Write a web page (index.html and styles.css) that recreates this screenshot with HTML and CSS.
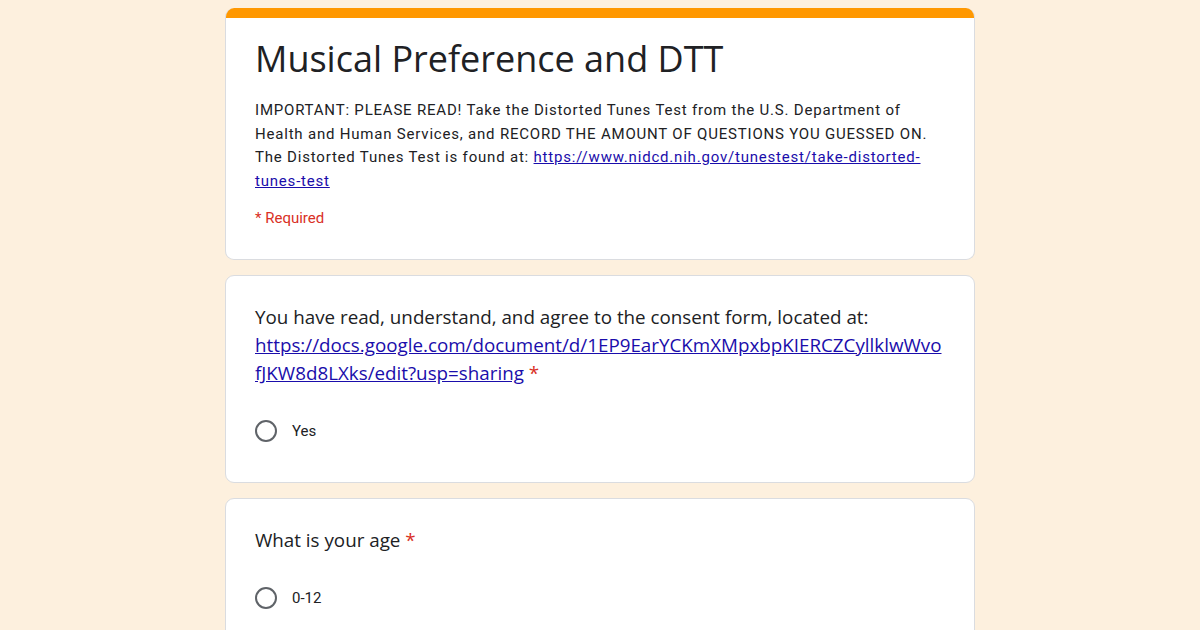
FILE: index.html
```html
<!DOCTYPE html>
<html lang="en">
<head>
<meta charset="utf-8">
<title>Musical Preference and DTT</title>
<link rel="stylesheet" href="styles.css">
</head>
<body>
<main class="form">
  <section class="card header-card">
    <div class="accent"></div>
    <div class="header-body">
      <h1 class="title">Musical Preference and DTT</h1>
      <p class="desc">IMPORTANT: PLEASE READ! Take the Distorted Tunes Test from the U.S. Department of Health and Human Services, and RECORD THE AMOUNT OF QUESTIONS YOU GUESSED ON. The Distorted Tunes Test is found at: <a class="link" href="#">https://www.nidcd.nih.gov/tunestest/take-distorted-tunes-test</a></p>
      <p class="required">* Required</p>
    </div>
  </section>

  <section class="card question">
    <div class="q-text">You have read, understand, and agree to the consent form, located at: <a class="link" href="#">https://docs.google.com/document/d/1EP9EarYCKmXMpxbpKIERCZCyllklwWvo<br>fJKW8d8LXks/edit?usp=sharing</a> <span class="star">*</span></div>
    <div class="options">
      <label class="option"><span class="radio"></span><span class="opt-label">Yes</span></label>
    </div>
  </section>

  <section class="card question">
    <div class="q-text">What is your age <span class="star">*</span></div>
    <div class="options">
      <label class="option"><span class="radio"></span><span class="opt-label">0-12</span></label>
    </div>
  </section>
</main>
</body>
</html>
```

FILE: styles.css
```css
html, body {
  margin: 0;
  padding: 0;
}
body {
  background: #fdf0de;
  font-family: Roboto, "Liberation Sans", sans-serif;
  color: #202124;
  height: 630px;
  overflow: hidden;
}
.form {
  width: 750px;
  margin: 8px auto 0;
  display: flex;
  flex-direction: column;
  gap: 15px;
}
.card {
  background: #fff;
  border: 1px solid #dadce0;
  border-radius: 9px;
  box-sizing: border-box;
}
.header-card {
  overflow: hidden;
  border-top: none;
}
.accent {
  height: 10px;
  background: #ff9800;
}
.header-body {
  padding: 19px 28px 29px 29px;
}
.title {
  margin: 0;
  font-family: "Open Sans", Roboto, sans-serif;
  font-weight: 400;
  font-size: 36px;
  line-height: 44px;
  letter-spacing: 0;
  color: #202124;
}
.desc {
  margin: 18px 0 0;
  font-size: 15px;
  line-height: 23.5px;
  letter-spacing: 0.8px;
  color: #202124;
}
.link {
  color: #1a0dab;
  text-decoration: underline;
}
.required {
  margin: 14px 0 0;
  font-size: 15px;
  line-height: 23px;
  color: #d93025;
}
.question {
  padding: 27px 28px 40px 29px;
}
.q-text {
  font-family: "Open Sans", Roboto, sans-serif;
  font-size: 18.8px;
  line-height: 28px;
  color: #202124;
}
.q-text .link {
  color: #1a0dab;
}
.star {
  color: #d93025;
}
.options {
  margin-top: 33px;
  display: flex;
  flex-direction: column;
}
.option {
  display: flex;
  align-items: center;
  gap: 15px;
  height: 22px;
}
.radio {
  width: 22px;
  height: 22px;
  box-sizing: border-box;
  border: 2px solid #5f6368;
  border-radius: 50%;
  flex: none;
}
.opt-label {
  font-size: 15px;
  color: #202124;
}
```
